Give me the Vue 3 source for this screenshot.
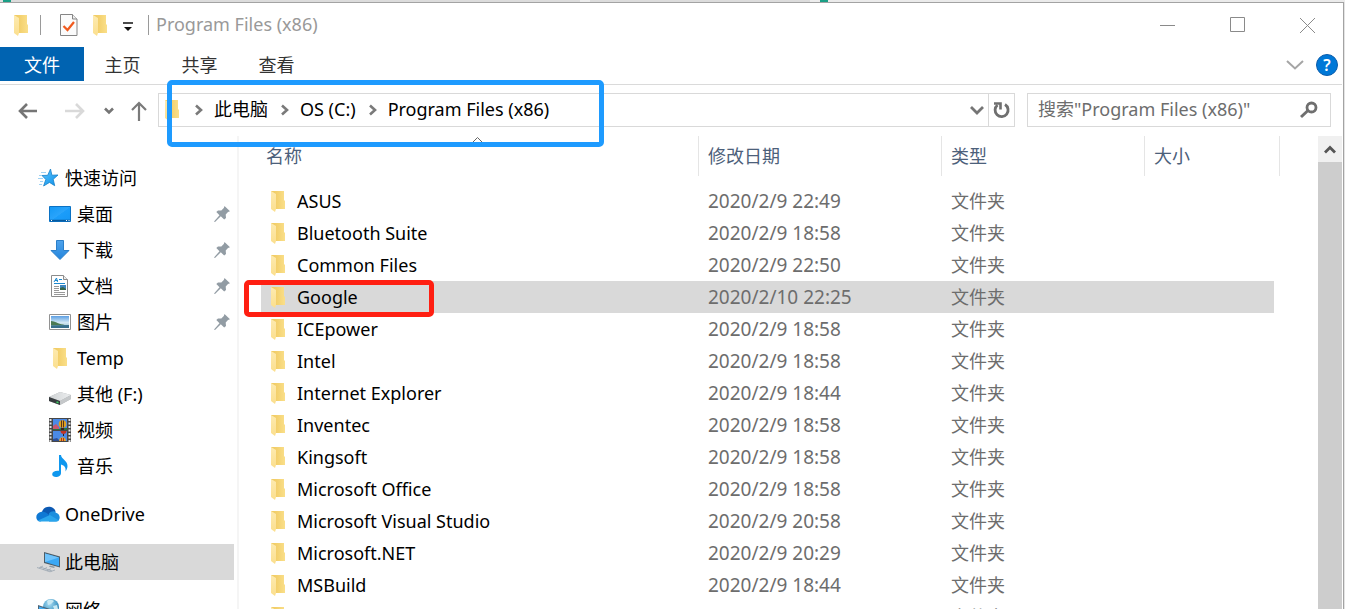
<script setup>
const tabs = ['主页', '共享', '查看']
const crumbs = ['此电脑', 'OS (C:)', 'Program Files (x86)']

const navGroups = [
  {
    root: { label: '快速访问', icon: 'star' },
    items: [
      { label: '桌面', icon: 'desktop', pinned: true },
      { label: '下载', icon: 'download', pinned: true },
      { label: '文档', icon: 'document', pinned: true },
      { label: '图片', icon: 'picture', pinned: true },
      { label: 'Temp', icon: 'folder' },
      { label: '其他 (F:)', icon: 'drive' },
      { label: '视频', icon: 'video' },
      { label: '音乐', icon: 'music' },
    ],
  },
  { root: { label: 'OneDrive', icon: 'cloud' }, items: [] },
  { root: { label: '此电脑', icon: 'computer', active: true }, items: [] },
  { root: { label: '网络', icon: 'network' }, items: [] },
]

const rows = [
  { name: 'ASUS', date: '2020/2/9 22:49' },
  { name: 'Bluetooth Suite', date: '2020/2/9 18:58' },
  { name: 'Common Files', date: '2020/2/9 22:50' },
  { name: 'Google', date: '2020/2/10 22:25', selected: true },
  { name: 'ICEpower', date: '2020/2/9 18:58' },
  { name: 'Intel', date: '2020/2/9 18:58' },
  { name: 'Internet Explorer', date: '2020/2/9 18:44' },
  { name: 'Inventec', date: '2020/2/9 18:58' },
  { name: 'Kingsoft', date: '2020/2/9 18:58' },
  { name: 'Microsoft Office', date: '2020/2/9 18:58' },
  { name: 'Microsoft Visual Studio', date: '2020/2/9 20:58' },
  { name: 'Microsoft.NET', date: '2020/2/9 20:29' },
  { name: 'MSBuild', date: '2020/2/9 18:44' },
  { name: '', date: '' },
]
</script>

<template>
  <svg class="defs" aria-hidden="true">
    <defs>
      <linearGradient id="g-folder" x1="0" x2="1" y1="0" y2="0">
        <stop offset="0" stop-color="#efc95f" />
        <stop offset="0.4" stop-color="#f3d06d" />
        <stop offset="1" stop-color="#fadf8a" />
      </linearGradient>
      <linearGradient id="g-flap" x1="0" x2="0" y1="0" y2="1">
        <stop offset="0" stop-color="#fdeab0" />
        <stop offset="1" stop-color="#fbdf8e" />
      </linearGradient>
      <linearGradient id="g-desk" x1="0" x2="1" y1="0" y2="1">
        <stop offset="0" stop-color="#1298f5" />
        <stop offset="0.5" stop-color="#2aa4fb" />
        <stop offset="0.52" stop-color="#1b9dfa" />
        <stop offset="1" stop-color="#1496f5" />
      </linearGradient>
      <linearGradient id="g-down" x1="0" x2="0" y1="0" y2="1">
        <stop offset="0" stop-color="#4fa3ec" />
        <stop offset="1" stop-color="#2385dc" />
      </linearGradient>
      <linearGradient id="g-star" x1="0" x2="1" y1="0" y2="1">
        <stop offset="0" stop-color="#5cc6ff" />
        <stop offset="1" stop-color="#0c8fe8" />
      </linearGradient>
      <linearGradient id="g-sky" x1="0" x2="0" y1="0" y2="1">
        <stop offset="0" stop-color="#5c9fe3" />
        <stop offset="0.55" stop-color="#d3e8f4" />
        <stop offset="1" stop-color="#8fb9c9" />
      </linearGradient>
      <linearGradient id="g-drive" x1="0" x2="1" y1="0" y2="0">
        <stop offset="0" stop-color="#cfd2d4" />
        <stop offset="1" stop-color="#eceeef" />
      </linearGradient>
      <radialGradient id="g-globe" cx="0.4" cy="0.3" r="0.8">
        <stop offset="0" stop-color="#a9dcf2" />
        <stop offset="0.6" stop-color="#4c9fca" />
        <stop offset="1" stop-color="#266f9e" />
      </radialGradient>
      <symbol id="folder" viewBox="0 0 24 24">
        <path d="M5 2h13v9l1 1v8H8z" fill="url(#g-folder)" />
        <path d="M5 2l5 3v15l-1 3-4-3z" fill="url(#g-flap)" />
      </symbol>
      <symbol id="star" viewBox="0 0 24 24">
        <path d="M14.500 3l1.400 6.200 6.100-.2-4.800 4.300 1.500 6.400-5.200-3.300-5.900 3.600 2.200-6.500-3.800-4 5.700-.2z" fill="url(#g-star)" stroke="#1780c8" stroke-width=".8" />
        <path d="M5 6.500h5M3 9.500h3M2 12.500h5M4 15.500h3M3 18.500h3" stroke="#9fd2f3" stroke-width="1" />
      </symbol>
      <symbol id="desktop" viewBox="0 0 24 24">
        <path d="M1.500 4.500h21v15h-21z" fill="url(#g-desk)" stroke="#0b72c4" />
        <path d="M2 18.500h20" stroke="#075a9e" stroke-width="1.500" />
        <path d="M3 18.500h1M18 18.500h1M20.500 18.500h1" stroke="#fff" />
      </symbol>
      <symbol id="download" viewBox="0 0 24 24">
        <path d="M8.500 2.500h7v10h5.500l-9 9-9-9h5.500z" fill="url(#g-down)" stroke="#2b7fc9" />
      </symbol>
      <symbol id="document" viewBox="0 0 24 24">
        <path d="M3.500 1.500h12l4 4v17h-16z" fill="#fff" stroke="#8b8b8b" />
        <path d="M15.500 1.500v4h4" fill="#eee" stroke="#8b8b8b" />
        <path d="M6 8l2.500-4 1 4M7 6.500h3M11 5.500h3M6 9.500h11" stroke="#1d8ad0" fill="none" />
        <path d="M6 12.500h5M6 14.500h5M6 16.500h5M6 18.500h11M6 20.500h11" stroke="#999" />
        <path d="M12 11h6v5h-6z" fill="#3f86bf" />
        <path d="M12 14l3-1 3 2v1h-6z" fill="#376448" />
      </symbol>
      <symbol id="picture" viewBox="0 0 24 24">
        <path d="M1.500 4.500h21v15h-21z" fill="#fff" stroke="#929292" />
        <path d="M3 6h18v12H3z" fill="url(#g-sky)" />
        <path d="M3 11c4 0 7 3 12 3.500l3 1H3z" fill="#4b7a54" />
        <path d="M3 15.500l18-.5v3H3z" fill="#376f8c" />
      </symbol>
      <symbol id="drive" viewBox="0 0 24 24">
        <path d="M1 15l11-5 11 3v4l-11 6-11-4z" fill="#a5a8aa" />
        <path d="M1 15l11-5 11 3-11 6z" fill="url(#g-drive)" />
        <path d="M1 15l11 4v4L1 19z" fill="#373b3e" />
        <path d="M8.500 20l2 .7" stroke="#3ccf62" stroke-width="1.500" />
        <path d="M12 19l11-6v4l-11 6z" fill="#c5c8ca" />
      </symbol>
      <symbol id="video" viewBox="0 0 24 24">
        <path d="M1 0h22v24H1z" fill="#474747" />
        <path d="M5 1h14v11H5zM5 13h14v10H5z" fill="#4b8ae6" />
        <path d="M2.500 1v23M21.500 1v23" stroke="#e4e4e4" stroke-width="2" stroke-dasharray="2 1.500" />
        <path d="M5 8l3-2 3 3v3H5z" fill="#c8576e" />
        <path d="M5 11h6l2-1h6v2H5z" fill="#29743b" />
        <circle cx="14.500" cy="6" r="3.800" fill="#e0a01f" />
        <path d="M13.500 2.500v7M15.500 2.500v7" stroke="#57341c" stroke-width="1" />
        <path d="M13 10h3v2h-3z" fill="#3a2020" />
        <path d="M12.500 13h6c0 2-1.500 3-3 3s-3-1-3-3z" fill="#c23424" />
        <path d="M15 16h1v2h-1z" fill="#2b2020" />
        <path d="M5 21l4-1 3 3H5z" fill="#2f4f94" />
        <path d="M11 23c0-5 7-5 7 0z" fill="#e2a72a" />
        <path d="M13.500 23v-3M15.500 23v-3" stroke="#b32e22" />
      </symbol>
      <symbol id="music" viewBox="0 0 24 24">
        <path d="M11 1h2c.3 4 6.500 5.500 6.500 11 0 2-1 4-2 5.500.6-4-1-6-4.500-7V19c0 2.600-2.600 4-5 4-2.200 0-3.800-1-3.800-2.700 0-2.500 3-4 6.800-3.500z" fill="#0f97ee" />
      </symbol>
      <symbol id="cloud" viewBox="0 0 24 24">
        <path d="M6 10c1-4 5-6 9-5 2.500.6 4 2.500 4.600 4.500L15 16z" fill="#0c59b3" />
        <path d="M4.500 19.500C-1.500 19 -1 10.500 5.500 9.800c3-.4 5.500 1.200 9 4.200z" fill="#0f78d4" />
        <path d="M13 11.500c2-3 6-3 7-.8 5 1.300 5 8.800-.5 8.800H13z" fill="#1b8ede" />
        <path d="M2 18.500l12-5.500 9 5.500c-1 .8-2 1-3.500 1h-15c-1 0-2-.4-2.500-1z" fill="#2aa5ec" />
      </symbol>
      <symbol id="computer" viewBox="0 0 24 24">
        <path d="M8 2l16 4.500v11L8 13z" fill="#4c5d68" />
        <path d="M9 3.500l14 4v8.700L9 12z" fill="#3aa8f5" />
        <path d="M9 3.500l14 4-14 4.500z" fill="#6fc3fb" />
        <path d="M14 15.500l5 1.300-1 1.200-5-1.200z" fill="#8e9ba3" />
        <path d="M1 17.500l6-1.500 12 4-5 2z" fill="#d5dade" />
        <path d="M1 17.500l13 4.300 5-1.800M4 17l12 4M7 16l-4 2M11 17.500l-4 2M15 18.700l-4 2" fill="none" stroke="#9aa5af" stroke-width=".8" />
      </symbol>
      <symbol id="network" viewBox="0 0 24 24">
        <circle cx="15" cy="9" r="8" fill="url(#g-globe)" />
        <path d="M11 3c3-2 5-1 7 0l-3 3-3 1zM17 8l4-1 1 4-3 3z" fill="#c9e9f3" />
        <path d="M2 7l12 4v9L2 16z" fill="#4d6576" />
        <path d="M3 8.500l10 3.300V18L3 15z" fill="#43aef6" />
      </symbol>
      <symbol id="pin" viewBox="0 0 16 16">
        <path d="M10.500 0L16 5.300l-2 .7-2.300 2.600.3 3.400-1.800 1.500-3.400-3.300L1 16l-1-.5 5.500-6.300L2.300 6 4 4.400l3.300.1L9.800 2z" fill="#929ca4" />
      </symbol>
      <symbol id="chev" viewBox="0 0 10 12">
        <path d="M2 1.500L7 6l-5 4.500" fill="none" stroke="#7a7a7a" stroke-width="2.600" />
      </symbol>
    </defs>
  </svg>

  <div class="screen">
    <div class="backdrop"></div>
    <main class="window">
      <header class="titlebar">
        <svg class="icon"><use href="#folder" /></svg>
        <i class="rule"></i>
        <button class="first" aria-label="属性">
          <svg width="18" height="22" viewBox="0 0 18 22">
            <path d="M.5.500h12l4.500 4.500v16.500H.5z" fill="#fbfbfb" stroke="#858585" />
            <path d="M12.500.5v4.500h4.500" fill="#eee" stroke="#858585" />
            <path d="M3.500 12l4 4 6.500-8" fill="none" stroke="#f05a1e" stroke-width="2.200" />
          </svg>
        </button>
        <button class="second" aria-label="新建文件夹">
          <svg class="icon"><use href="#folder" /></svg>
        </button>
        <button class="third" aria-label="自定义快速访问工具栏">
          <svg width="10" height="10" viewBox="0 0 10 10">
            <path d="M0 1h10" stroke="#111" stroke-width="1.500" />
            <path d="M1 5h8L5 9z" fill="#111" />
          </svg>
        </button>
        <i class="rule"></i>
        <h1 class="title">Program Files (x86)</h1>
        <div class="controls">
          <button aria-label="最小化">
            <svg width="16" height="16"><path d="M1 8.500h15" stroke="#8a8a8a" /></svg>
          </button>
          <button aria-label="最大化">
            <svg width="16" height="16"><path d="M1.500.500h14v14h-14z" fill="none" stroke="#8a8a8a" /></svg>
          </button>
          <button aria-label="关闭">
            <svg width="16" height="16"><path d="M1 1l15 15M16 1L1 16" stroke="#8a8a8a" /></svg>
          </button>
        </div>
      </header>

      <nav class="ribbon">
        <button class="tab file">文件</button>
        <button v-for="t in tabs" :key="t" class="tab">{{ t }}</button>
        <button class="expand" aria-label="展开功能区">
          <svg width="18" height="10"><path d="M1 1l8 7.500L17 1" fill="none" stroke="#a5a5a5" stroke-width="2" /></svg>
        </button>
        <button class="help" aria-label="帮助">?</button>
      </nav>

      <div class="toolbar">
        <div class="moves">
          <button aria-label="后退">
            <svg width="20" height="16"><path d="M19 8H2M9 1L2 8l7 7" fill="none" stroke="#757575" stroke-width="2.600" /></svg>
          </button>
          <button aria-label="前进">
            <svg width="20" height="16"><path d="M0 8h18M11 1l7 7-7 7" fill="none" stroke="#d9d9d9" stroke-width="2.600" /></svg>
          </button>
          <button aria-label="最近位置">
            <svg width="10" height="8"><path d="M1 1.500l4 4 4-4" fill="none" stroke="#757575" stroke-width="2.600" /></svg>
          </button>
          <button aria-label="上移">
            <svg width="16" height="20"><path d="M8 20V2M1 9l7-7 7 7" fill="none" stroke="#7a7a7a" stroke-width="2.200" /></svg>
          </button>
        </div>
        <div class="address">
          <svg class="icon"><use href="#folder" /></svg>
          <template v-for="c in crumbs" :key="c">
            <svg class="chev"><use href="#chev" /></svg>
            <a href="#" class="crumb">{{ c }}</a>
          </template>
          <button class="drop" aria-label="以前的位置">
            <svg width="14" height="10"><path d="M1 2l6 6 6-6" fill="none" stroke="#757575" stroke-width="2.800" /></svg>
          </button>
          <button class="refresh" aria-label="刷新">
            <svg width="18" height="18" viewBox="0 0 18 18">
              <path d="M12 3.500A6.500 6.500 0 1 1 4.500 4" fill="none" stroke="#6f6f6f" stroke-width="2.800" />
              <path d="M1 2.500h6.500v6" fill="none" stroke="#6f6f6f" stroke-width="2.600" />
            </svg>
          </button>
          <div class="mark blue"></div>
        </div>
        <label class="search">
          <input type="text" aria-label="搜索" placeholder='搜索"Program Files (x86)"' />
          <svg width="18" height="18" viewBox="0 0 18 18">
            <circle cx="11.500" cy="6.500" r="4.500" fill="none" stroke="#6f6f6f" stroke-width="2.800" />
            <path d="M8 9.500L1 16" stroke="#6f6f6f" stroke-width="3" />
          </svg>
        </label>
      </div>

      <div class="body">
        <aside class="tree">
          <ul v-for="g in navGroups" :key="g.root.label">
            <li>
              <a href="#" class="node" :class="{ active: g.root.active }">
                <svg class="icon"><use :href="'#' + g.root.icon" /></svg>
                <span>{{ g.root.label }}</span>
              </a>
            </li>
            <li v-for="n in g.items" :key="n.label">
              <a href="#" class="node child">
                <svg class="icon"><use :href="'#' + n.icon" /></svg>
                <span>{{ n.label }}</span>
                <svg v-if="n.pinned" class="pin"><use href="#pin" /></svg>
              </a>
            </li>
          </ul>
        </aside>

        <section class="files">
          <table>
            <thead>
              <tr>
                <th class="c-name">
                  名称
                  <svg class="sort" width="11" height="6"><path d="M.5 5.500l5-5 5 5" fill="none" stroke="#666" /></svg>
                </th>
                <th class="c-date">修改日期</th>
                <th class="c-type">类型</th>
                <th class="c-size">大小</th>
              </tr>
            </thead>
            <tbody>
              <tr v-for="r in rows" :key="r.name" :class="{ selected: r.selected }">
                <td class="name">
                  <div class="entry">
                    <svg class="icon"><use href="#folder" /></svg>
                    <span>{{ r.name }}</span>
                  </div>
                  <div v-if="r.selected" class="mark red"></div>
                </td>
                <td class="date">{{ r.date }}</td>
                <td>文件夹</td>
                <td></td>
              </tr>
            </tbody>
          </table>
        </section>

        <div class="scroll">
          <button aria-label="向上滚动">
            <svg width="12" height="10"><path d="M1 8.500l5-5 5 5" fill="none" stroke="#555" stroke-width="2.800" /></svg>
          </button>
          <div class="thumb"></div>
        </div>
      </div>
    </main>
  </div>
</template>

<style>
body {
  margin: 0;
  overflow: hidden;
}
</style>

<style scoped>
* {
  box-sizing: border-box;
}
.defs {
  position: absolute;
  width: 0;
  height: 0;
}
.screen {
  display: flex;
  flex-direction: column;
  height: 100vh;
  background: #e4e4e4;
  font-family: "Noto Sans", "Noto Sans CJK SC", sans-serif;
  font-size: 18px;
  line-height: 24px;
  color: #000;
}
.backdrop {
  flex: none;
  height: 2px;
  background: linear-gradient(90deg, #e0e0e0 3px, #1a9f86 3px 11px, #dcdcdc 11px 580px, #ededed 580px 590px, #dcdcdc 590px 810px, #ededed 810px 820px, #1a9f86 820px 828px, #ebebeb 828px);
}
.window {
  flex: 1;
  min-height: 0;
  display: flex;
  flex-direction: column;
  margin-right: 1px;
  background: #fff;
  border-top: 1px solid #a3a3a3;
  border-right: 1px solid #a3a3a3;
  padding-right: 1px;
}
button {
  display: flex;
  align-items: center;
  justify-content: center;
  padding: 0;
  border: 0;
  background: none;
  font: inherit;
  color: inherit;
}
a {
  color: inherit;
  text-decoration: none;
}
svg {
  display: block;
  flex: none;
}
.icon {
  width: 24px;
  height: 24px;
}

.titlebar {
  flex: none;
  display: flex;
  align-items: center;
  height: 44px;
  padding-left: 9px;
}
.rule {
  width: 1px;
  height: 20px;
  margin-left: 7px;
  background: #9a9a9a;
}
.first {
  margin-left: 19px;
}
.second {
  margin-left: 10px;
}
.third {
  margin: 4px 8px 0 11px;
}
.title {
  margin: 0 0 2px 7px;
  font-size: 18px;
  font-weight: 400;
  color: #999;
}
.controls {
  display: flex;
  margin-left: auto;
}
.controls button {
  width: 70px;
  height: 44px;
}

.ribbon {
  flex: none;
  display: flex;
  align-items: center;
  height: 38px;
  padding-right: 4px;
  border-bottom: 1px solid #dadada;
  color: #333;
}
.tab {
  width: 77px;
  height: 34px;
  margin-bottom: 3px;
  padding-top: 1px;
}
.file {
  width: 84px;
  background: #0063b1;
  color: #fff;
}
.expand {
  margin: 0 0 2px auto;
}
.help {
  width: 22px;
  height: 22px;
  margin: 0 0 2px 12px;
  border: 1px solid #0b5cab;
  border-radius: 50%;
  background: #0078d7;
  color: #fff;
  font-size: 16px;
  font-weight: 600;
}

.toolbar {
  flex: none;
  display: flex;
  align-items: center;
  height: 51px;
  padding: 0 11px 2px 0;
}
.moves {
  flex: none;
  display: flex;
  align-items: center;
  width: 158px;
  padding: 2px 0 0 18px;
}
.moves button:nth-child(2) {
  margin-left: 27px;
}
.moves button:nth-child(3) {
  margin-left: 19px;
}
.moves button:nth-child(4) {
  margin-left: 17px;
}
.address {
  position: relative;
  flex: 1;
  display: flex;
  align-items: center;
  height: 34px;
  padding-left: 1px;
  border: 1px solid #d9d9d9;
}
.crumb {
  padding: 0 2px 2px 0;
}
.chev {
  width: 10px;
  height: 12px;
  margin: 0 10px;
}
.drop {
  margin-left: auto;
  margin-right: 4px;
}
.refresh {
  width: 26px;
  align-self: stretch;
  border-left: 1px solid #d9d9d9;
}
.search {
  flex: none;
  display: flex;
  align-items: center;
  width: 304px;
  height: 34px;
  margin-left: 12px;
  padding: 0 12px 0 10px;
  border: 1px solid #d9d9d9;
}
.search input {
  flex: 1;
  min-width: 0;
  padding: 0 0 2px;
  border: 0;
  outline: 0;
  background: none;
  font: inherit;
}
.search input::placeholder {
  color: #6d6d6d;
  opacity: 1;
}
.mark {
  position: absolute;
  z-index: 2;
  border: 5px solid;
  border-radius: 5px;
  pointer-events: none;
}
.blue {
  top: -14px;
  left: 8px;
  width: 437px;
  height: 67px;
  border-color: #1e9bff;
}
.red {
  top: -1px;
  left: -17px;
  width: 190px;
  height: 37px;
  border-color: #ff1f12;
}

.body {
  flex: 1;
  min-height: 0;
  display: flex;
}
.tree {
  flex: none;
  width: 239px;
  padding-top: 24px;
  border-right: 2px solid #f5f5f5;
  overflow: hidden;
}
.tree ul {
  margin: 0 0 12px;
  padding: 0;
  list-style: none;
}
.node {
  display: flex;
  align-items: center;
  gap: 5px;
  height: 36px;
  margin-right: 3px;
  padding-left: 36px;
}
.child {
  padding-left: 48px;
}
.active {
  background: #d9d9d9;
}
.pin {
  width: 16px;
  height: 16px;
  margin-left: auto;
  margin-right: 4px;
}
.files {
  flex: 1;
  min-width: 0;
  padding: 0 38px 0 22px;
  overflow: hidden;
}
table {
  width: 100%;
  table-layout: fixed;
  border-spacing: 0;
}
th {
  position: relative;
  height: 40px;
  padding: 0 9px;
  border-left: 1px solid #e5e5e5;
  text-align: left;
  font-weight: 400;
  color: #4c607a;
}
.c-name {
  padding-left: 5px;
  border-left: 0;
}
.c-date {
  width: 243px;
}
.c-type {
  width: 203px;
}
.c-size {
  width: 136px;
  border-right: 1px solid #e5e5e5;
}
.sort {
  position: absolute;
  top: 1px;
  left: 50%;
  margin-left: -8px;
}
thead::after {
  content: "";
  display: block;
  height: 9px;
}
td {
  height: 32px;
  padding: 0 10px;
  color: #6d6d6d;
}
td.name {
  position: relative;
  padding: 0 0 0 5px;
  color: #000;
}
.date {
  font-size: 19px;
}
.entry {
  display: flex;
  align-items: center;
  gap: 7px;
}
.selected td {
  background: #d9d9d9;
  background-clip: padding-box;
}
td:last-child {
  border-right: 6px solid transparent;
}

.scroll {
  flex: none;
  display: flex;
  flex-direction: column;
  width: 24px;
  background: #f0f0f0;
}
.scroll button {
  height: 26px;
}
.thumb {
  flex: 1;
  background: #cdcdcd;
}
</style>
